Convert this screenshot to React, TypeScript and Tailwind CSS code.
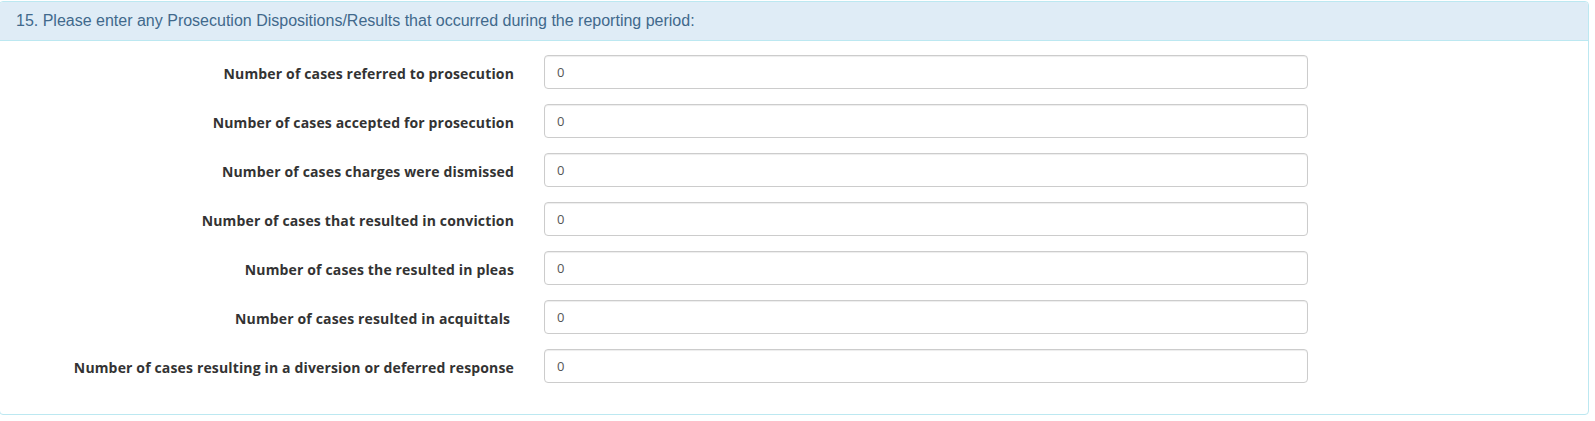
import React, { useState } from 'react';

const fields = [
  'Number of cases referred to prosecution',
  'Number of cases accepted for prosecution',
  'Number of cases charges were dismissed',
  'Number of cases that resulted in conviction',
  'Number of cases the resulted in pleas',
  'Number of cases resulted in acquittals ',
  'Number of cases resulting in a diversion or deferred response',
];

const App: React.FC = () => {
  const [values, setValues] = useState<string[]>(fields.map(() => '0'));

  const handleChange = (i: number, v: string) => {
    setValues(prev => prev.map((old, idx) => (idx === i ? v : old)));
  };

  return (
    <div className="bg-white w-[1595px] h-[421px] overflow-hidden pt-px font-['Liberation_Sans',Arial,sans-serif]">
      <div className="ml-[-1px] w-[1590px] border border-[#bce8f1] rounded-[4px] bg-white">
        {/* Heading */}
        <div className="h-[39px] bg-[#dfecf6] border-b border-[#bce8f1] rounded-t-[3px] px-[16px] flex items-center text-[16px] text-[#41698c]">
          15. Please enter any Prosecution Dispositions/Results that occurred during the reporting period:
        </div>

        {/* Body */}
        <div className="pt-[14px] pb-[31px] flex flex-col gap-[15px]">
          {fields.map((label, i) => (
            <div key={i} className="flex items-center">
              <label
                htmlFor={`field-${i}`}
                className="w-[544px] pr-[30px] text-right text-[14px] tracking-[0.15px] font-bold text-[#333] whitespace-pre pt-[3px] font-['Open_Sans',sans-serif]"
              >
                {label}
              </label>
              <input
                id={`field-${i}`}
                type="text"
                value={values[i]}
                onChange={e => handleChange(i, e.target.value)}
                className="w-[764px] h-[34px] px-[12px] border border-[#ccc] rounded-[4px] text-[13px] text-[#555] bg-white shadow-[inset_0_1px_1px_rgba(0,0,0,0.075)] outline-none font-['Open_Sans',sans-serif]"
              />
            </div>
          ))}
        </div>
      </div>
    </div>
  );
};

export default App;
